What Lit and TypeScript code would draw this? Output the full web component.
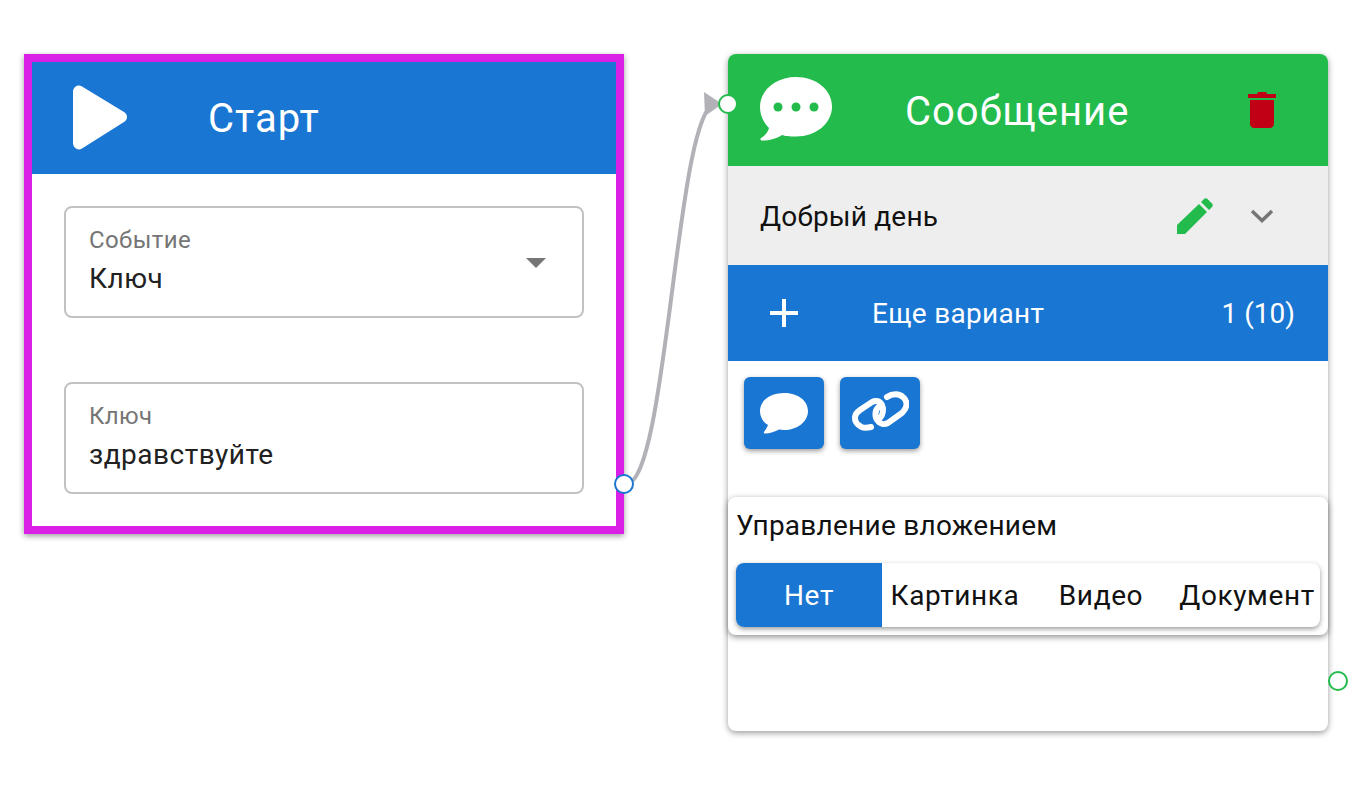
import {LitElement, css, html, svg} from 'lit'
import {customElement} from 'lit/decorators.js'

const bubbleDots = svg`<path d="M37 0C17 0 1 13 1 30c0 9 4 16 9 21-1 4-4 8-8 10-1 1-.5 2.500 1 2.500 8 0 15-2 20-5.500 3 1 7 1.500 14 1.500 20 0 36-13 36-30S57 0 37 0z" fill="#fff"/>
    <circle cx="19" cy="30" r="4.500" fill="#22bb4c"/><circle cx="37" cy="30" r="4.500" fill="#22bb4c"/><circle cx="55" cy="30" r="4.500" fill="#22bb4c"/>`

@customElement('app-root')
export class AppRoot extends LitElement {
    render() {
        return html`
        <div class="canvas">
            <svg class="wire" width="1364" height="796" viewBox="0 0 1364 796">
                <path d="M626 484C668 484 676 104 716 104" fill="none" stroke="#b1b1b7" stroke-width="4"/>
                <path d="M704 92L722 104L705 116Z" fill="#b1b1b7"/>
            </svg>

            <div class="node start">
                <div class="head blue-bg">
                    <svg class="play" width="56" height="66" viewBox="0 0 56 66">
                        <path d="M1 7C1 2 6-1 10 1.500L52 27C56 29.500 56 34.500 52 37L10 63.500C6 66 1 63 1 58Z" fill="#fff"/>
                    </svg>
                    <span class="title">Старт</span>
                </div>
                <div class="body">
                    <div class="field select">
                        <label>Событие</label>
                        <div class="value">Ключ</div>
                        <svg class="caret" width="20" height="10" viewBox="0 0 20 10"><path d="M0 0H20L10 10Z" fill="#757575"/></svg>
                    </div>
                    <div class="field">
                        <label>Ключ</label>
                        <div class="value">здравствуйте</div>
                    </div>
                </div>
                <span class="port out blue"></span>
            </div>

            <div class="node message">
                <div class="head green-bg">
                    <svg class="chat" width="74" height="64" viewBox="0 0 74 64">${bubbleDots}</svg>
                    <span class="title">Сообщение</span>
                    <svg class="trash" width="28" height="36" viewBox="0 0 28 36">
                        <path d="M0 2H9L10 0H18L19 2H28V6H0Z M2 8H26V32C26 34 24 36 22 36H6C4 36 2 34 2 32Z" fill="#c10015"/>
                    </svg>
                </div>
                <div class="variant">
                    <span>Добрый день</span>
                    <svg class="pencil" width="36" height="36" viewBox="0 0 36 36">
                        <path d="M0 27L22 6L30 14L8 36H0Z M24 4L27 1C28 0 29.500 0 30.500 1L35 5.500C36 6.500 36 8 35 9L32 12Z" fill="#22bb4c"/>
                    </svg>
                    <svg class="chevron" width="24" height="14" viewBox="0 0 24 14">
                        <path d="M2 2L12 11.500L22 2" fill="none" stroke="#757575" stroke-width="3.500"/>
                    </svg>
                </div>
                <div class="more blue-bg">
                    <svg width="30" height="30" viewBox="0 0 30 30"><path d="M13 1H17V13H29V17H17V29H13V17H1V13H13Z" fill="#fff"/></svg>
                    <span class="more-label">Еще вариант</span>
                    <span class="count">1 (10)</span>
                </div>
                <div class="actions">
                    <button>
                        <svg width="48" height="42" viewBox="0 0 48 42">
                            <path d="M24 1C11 1 0 8 0 19c0 6 3 11 8 14-1 3-3 5-4 7-.5 1 0 1.500 1 1.500 5 0 10-2 14-4 2 .3 3 .5 5 .5 13 0 24-8 24-19S37 1 24 1z" fill="#fff"/>
                        </svg>
                    </button>
                    <button>
                        <svg width="58" height="44" viewBox="0 0 58 44" fill="none" stroke="#fff" stroke-width="6" stroke-linecap="round">
                            <path d="M20 36C16 37 13 37 10.500 36C6 34 3.500 30 4 26C4.500 23 6 21 9 19L21 11C25 9 29 10 31 14C33 18 32 24 29 27"/>
                            <path d="M36 6C39 4 43 3 47 3.500C52 4.500 55.500 9 55.500 13C55.500 17 53 20 51 22L37 32C33 34 29 33 27 30C24 27 23 20 27.500 16"/>
                        </svg>
                    </button>
                </div>
                <div class="attach">
                    <div class="attach-title">Управление вложением</div>
                    <div class="tabs">
                        <div class="tab active">Нет</div>
                        <div class="tab">Картинка</div>
                        <div class="tab">Видео</div>
                        <div class="tab">Документ</div>
                    </div>
                </div>
                <span class="port in green"></span>
                <span class="port out-low green"></span>
            </div>
        </div>`
    }

    static styles = css`
        :host {
            display: block;
            font-family: Roboto, Inter, "Noto Sans", sans-serif;
        }

        .canvas {
            position: relative;
            width: 1364px;
            height: 796px;
            background: #fff;
            overflow: hidden;
        }

        .wire {
            position: absolute;
            left: 0;
            top: 0;
        }

        .node {
            position: absolute;
            box-sizing: border-box;
            width: 600px;
            background: #fff;
            box-shadow: 0 2px 6px rgba(0, 0, 0, .4);
        }

        .start {
            left: 24px;
            top: 54px;
            height: 480px;
            border: 8px solid #d920e6;
        }

        .message {
            left: 728px;
            top: 54px;
            height: 677px;
            border-radius: 8px;
        }

        .head {
            position: relative;
            display: flex;
            align-items: center;
            height: 112px;
            color: #fff;
        }

        .blue-bg { background: #1976d2; }

        .green-bg {
            background: #22bb4c;
            border-radius: 8px 8px 0 0;
        }

        .title {
            font-size: 40px;
            line-height: 48px;
            letter-spacing: 1px;
            white-space: nowrap;
        }

        .start .play { margin-left: 40px; }
        .start .title { margin-left: 80px; margin-top: 2px; }

        .message .chat { margin-left: 31px; margin-top: -2px; }
        .message .title { margin-left: 72px; margin-top: 4px; }
        .message .trash { margin-left: auto; margin-right: 52px; }

        .body {
            display: flex;
            flex-direction: column;
            gap: 64px;
            padding: 32px;
        }

        .field {
            position: relative;
            box-sizing: border-box;
            height: 112px;
            padding: 18px 23px 0;
            border: 2px solid #c2c2c2;
            border-radius: 8px;
        }

        .field label {
            display: block;
            font-size: 24px;
            line-height: 28px;
            letter-spacing: .4px;
            color: #757575;
        }

        .field .value {
            font-size: 28px;
            line-height: 36px;
            letter-spacing: .5px;
            margin-top: 7px;
            color: #212121;
        }

        .caret {
            position: absolute;
            right: 36px;
            top: 50px;
        }

        .variant {
            display: flex;
            align-items: center;
            height: 99px;
            padding: 0 54px 0 32px;
            background: #eee;
            font-size: 28px;
            letter-spacing: .2px;
            color: #111;
        }

        .variant span { margin-top: 2px; }
        .variant .pencil { margin-left: auto; }
        .variant .chevron { margin-left: 37px; }

        .more {
            display: flex;
            align-items: center;
            height: 96px;
            padding: 0 33px 0 41px;
            color: #fff;
            font-size: 28px;
        }

        .more-label { margin-left: 73px; letter-spacing: .3px; }
        .count { margin-left: auto; }

        .actions {
            display: flex;
            gap: 16px;
            padding: 16px 16px 0;
        }

        .actions button {
            display: flex;
            align-items: center;
            justify-content: center;
            width: 80px;
            height: 72px;
            padding: 0;
            border: 0;
            border-radius: 6px;
            background: #1976d2;
            box-shadow: 0 2px 5px rgba(0, 0, 0, .4);
        }

        .attach {
            box-sizing: border-box;
            height: 138px;
            margin-top: 48px;
            padding: 8px;
            border-radius: 8px;
            background: #fff;
            box-shadow: 0 2px 6px rgba(0, 0, 0, .45);
        }

        .attach-title {
            font-size: 28px;
            line-height: 42px;
            letter-spacing: .25px;
            color: #111;
        }

        .tabs {
            display: grid;
            grid-template-columns: repeat(4, 146px);
            margin-top: 16px;
            border-radius: 8px;
            box-shadow: 0 2px 5px rgba(0, 0, 0, .4);
        }

        .tab {
            height: 64px;
            line-height: 66px;
            text-align: center;
            font-size: 28px;
            letter-spacing: .6px;
            color: #111;
            white-space: nowrap;
        }

        .tab.active {
            background: #1976d2;
            color: #fff;
            border-radius: 8px 0 0 8px;
        }

        .port {
            position: absolute;
            box-sizing: border-box;
            width: 20px;
            height: 20px;
            border-radius: 50%;
            background: #fff;
            border: 2px solid;
        }

        .port.blue { border-color: #1976d2; }
        .port.green { border-color: #22bb4c; }

        .port.out { right: -18px; top: 412px; }
        .port.in { left: -10px; top: 40px; }
        .port.out-low { right: -20px; top: 617px; }
    `
}

declare global {
    interface HTMLElementTagNameMap {
        'app-root': AppRoot
    }
}
